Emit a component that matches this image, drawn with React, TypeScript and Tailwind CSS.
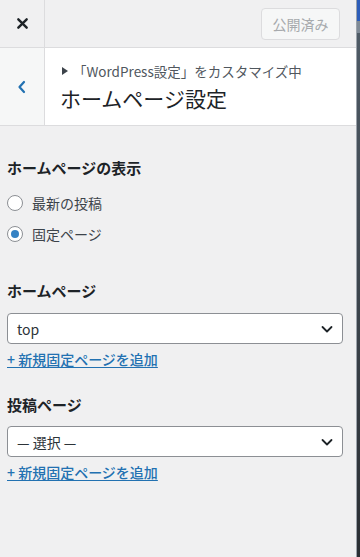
import React from "react";

const font = { fontFamily: '"Noto Sans CJK JP", "Noto Sans", sans-serif' };

function Chevron() {
  return (
    <svg width="14" height="14" viewBox="0 0 14 14" className="text-[#1d2327]">
      <path d="M2.5 5 L7 9.5 L11.5 5" fill="none" stroke="currentColor" strokeWidth="1.8" strokeLinecap="round" strokeLinejoin="round" />
    </svg>
  );
}

function Select({ value }: { value: string }) {
  return (
    <div className="h-[31px] w-[336px] rounded-[4px] border border-[#8c8f94] bg-white flex items-center justify-between pl-[9px] pr-[8px]">
      <span className="text-[14px] text-[#2c3338] leading-none">{value}</span>
      <Chevron />
    </div>
  );
}

function Radio({ checked, label }: { checked?: boolean; label: string }) {
  return (
    <div className="h-[24px] flex items-center">
      <div className="w-[16px] h-[16px] rounded-full border border-[#8c8f94] bg-white flex items-center justify-center">
        {checked && <div className="w-[8px] h-[8px] rounded-full bg-[#3582c4]" />}
      </div>
      <span className="ml-[9px] text-[14px] text-[#3c434a]">{label}</span>
    </div>
  );
}

function AddLink() {
  return (
    <div className="h-[18px] flex items-center">
      <span className="text-[14px] font-medium text-[#2271b1] underline underline-offset-2 leading-none">+ 新規固定ページを追加</span>
    </div>
  );
}

export default function App() {
  return (
    <div className="w-[360px] h-[557px] flex overflow-hidden" style={font}>
      <div className="w-[356px] h-full bg-[#f0f0f1] flex flex-col">
        {/* Top header */}
        <div className="h-[48px] flex border-b border-[#dcdcde] bg-[#f0f0f1]">
          <div className="w-[45px] h-full border-r border-[#dcdcde] flex items-center justify-center">
            <svg width="13" height="13" viewBox="0 0 14 14">
              <path d="M2.5 2.5 L11.5 11.5 M11.5 2.5 L2.5 11.5" stroke="#1d2327" strokeWidth="2.6" strokeLinecap="round" />
            </svg>
          </div>
          <div className="flex-1 flex items-start justify-end pr-[16px] pt-[8px]">
            <div className="h-[32px] w-[79px] rounded-[4px] border border-[#dcdcde] bg-[#f6f7f7] flex items-center justify-center text-[14px] text-[#a7aaad]">
              公開済み
            </div>
          </div>
        </div>
        {/* Section header */}
        <div className="h-[78px] flex bg-white border-b border-[#dcdcde]">
          <div className="w-[45px] h-full bg-[#f6f7f7] border-r border-[#dcdcde] flex items-center justify-center">
            <svg width="12" height="14" viewBox="0 0 12 14">
              <path d="M8 2 L3.5 7 L8 12" fill="none" stroke="#2271b1" strokeWidth="2.2" strokeLinecap="round" strokeLinejoin="round" />
            </svg>
          </div>
          <div className="flex-1 pl-[17px] pt-[12px]">
            <div className="flex items-center h-[22px] text-[13.5px] text-[#50575e]">
              <svg width="6" height="8" viewBox="0 0 6 8" className="mr-[5px]">
                <path d="M0 0 L6 4 L0 8 Z" fill="#3c434a" />
              </svg>
              <span>「WordPress設定」をカスタマイズ中</span>
            </div>
            <div className="text-[21px] leading-[30px] text-[#1d2327] mt-[1px] -ml-[2px]">ホームページ設定</div>
          </div>
        </div>
        {/* Content */}
        <div className="pl-[7px] pt-[32px]">
          <div className="h-[20px] flex items-center text-[15px] font-bold text-[#1d2327]">ホームページの表示</div>
          <div className="mt-[13px]">
            <Radio label="最新の投稿" />
          </div>
          <div className="mt-[7px]">
            <Radio checked label="固定ページ" />
          </div>
          <div className="mt-[35px] h-[20px] flex items-center text-[15px] font-bold text-[#1d2327]">ホームページ</div>
          <div className="mt-[12px]">
            <Select value="top" />
          </div>
          <div className="mt-[6px]">
            <AddLink />
          </div>
          <div className="mt-[27px] h-[20px] flex items-center text-[15px] font-bold text-[#1d2327]">投稿ページ</div>
          <div className="mt-[11px]">
            <Select value="— 選択 —" />
          </div>
          <div className="mt-[6px]">
            <AddLink />
          </div>
        </div>
      </div>
      <div className="w-[4px] h-full flex flex-col border-l border-[#9ca3ab]">
        <div className="h-[21px] bg-[#2d5db9]" />
        <div className="h-[12px] bg-[#7f8a96]" />
        <div className="flex-1 bg-gradient-to-b from-[#4f5b66] via-[#3d454d] to-[#2a2e33]" />
      </div>
    </div>
  );
}
